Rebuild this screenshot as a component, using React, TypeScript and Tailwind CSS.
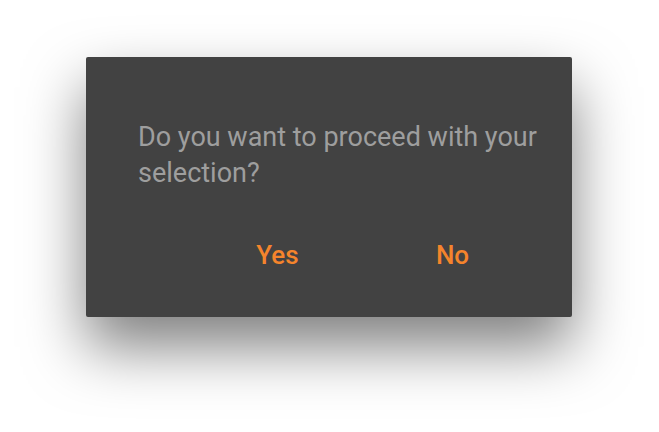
export default function App() {
  return (
    <div className="w-[659px] h-[432px] bg-white overflow-hidden" style={{ fontFamily: "Roboto, 'Noto Sans', sans-serif" }}>
      <div className="ml-[86px] mt-[57px] w-[486px] h-[260px] bg-[#424242] rounded-[2px] shadow-[0_30px_60px_rgba(0,0,0,0.5)] flex flex-col">
        <div className="pt-[62px] pl-[52px] pr-[20px] text-[27px] leading-[36px] text-[#9e9e9e]">
          Do you want to proceed with your selection?
        </div>
        <div className="flex justify-end pr-[32px] mt-[36px]">
          <button className="w-[175px] h-[56px] text-[26px] font-medium text-[#f5842c] text-center">Yes</button>
          <button className="w-[175px] h-[56px] text-[26px] font-medium text-[#f5842c] text-center">No</button>
        </div>
      </div>
    </div>
  );
}
